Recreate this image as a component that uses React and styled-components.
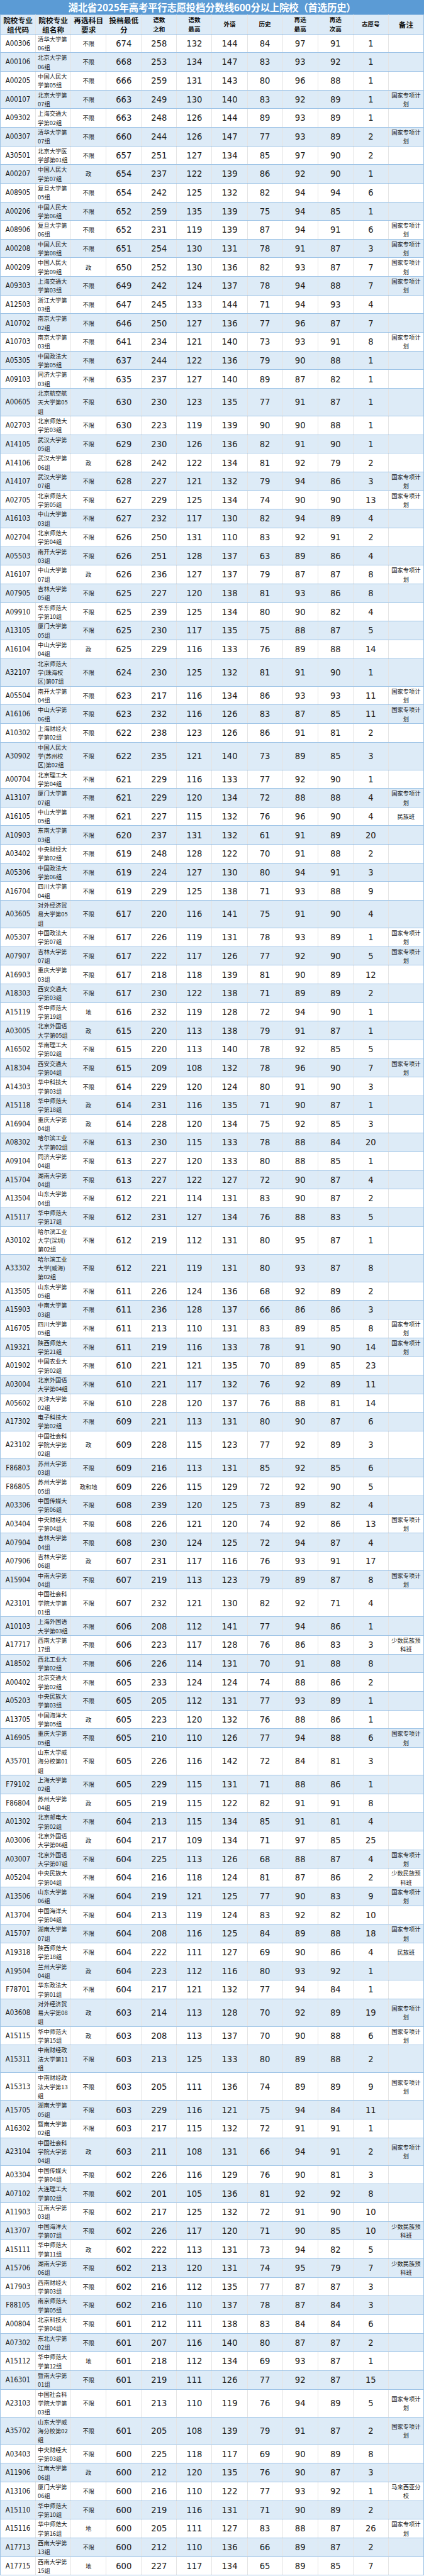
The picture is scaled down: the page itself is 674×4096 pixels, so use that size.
import React from "react";
import styled, { createGlobalStyle } from "styled-components";

const GlobalStyle = createGlobalStyle`
  html, body { margin: 0; padding: 0; background: #ffffff; }
  * { box-sizing: border-box; }
`;

const G = "国家专项计划";
const S = "少数民族预科班";
const M = "民族班";
const X = "马来西亚分校";

const RAW = `A00306,清华大学第06组,不限,674,258,132,144,84,97,91,1,
A00106,北京大学第06组,不限,668,253,134,147,83,93,92,1,
A00205,中国人民大学第05组,不限,666,259,131,143,80,96,88,1,
A00107,北京大学第07组,不限,663,249,130,140,83,92,89,1,G
A09302,上海交通大学第02组,不限,663,248,126,144,89,93,89,1,
A00307,清华大学第07组,不限,660,244,126,147,77,93,89,2,G
A30501,北京大学医学部第01组,不限,657,251,127,134,85,97,90,2,
A00207,中国人民大学第07组,政,654,237,122,139,86,92,90,1,
A08905,复旦大学第05组,不限,654,242,125,132,82,94,94,6,
A00206,中国人民大学第06组,不限,652,259,135,139,75,94,85,1,
A08906,复旦大学第06组,不限,652,231,119,139,87,94,91,6,G
A00208,中国人民大学第08组,不限,651,254,130,131,78,91,87,3,G
A00209,中国人民大学第09组,政,650,252,130,136,82,93,87,7,G
A09303,上海交通大学第03组,不限,649,242,124,137,78,94,88,7,G
A12503,浙江大学第03组,不限,647,245,133,144,71,94,93,4,
A10702,南京大学第02组,不限,646,250,127,136,77,96,87,7,
A10703,南京大学第03组,不限,641,234,121,140,73,93,91,8,G
A05305,中国政法大学第05组,不限,637,244,122,136,79,90,88,1,
A09103,同济大学第03组,不限,635,237,127,140,89,87,82,1,
A00605,北京航空航天大学第05组,不限,630,230,123,135,77,91,87,1,
A02703,北京师范大学第03组,不限,630,223,119,139,90,90,88,1,
A14105,武汉大学第05组,不限,629,230,126,136,82,91,90,1,
A14106,武汉大学第06组,政,628,242,122,134,81,92,79,2,
A14107,武汉大学第07组,不限,628,227,121,132,79,94,86,3,G
A02705,北京师范大学第05组,不限,627,229,125,134,74,90,90,13,G
A16103,中山大学第03组,不限,627,232,117,130,82,94,89,4,
A02704,北京师范大学第04组,不限,626,250,131,110,83,92,91,2,
A05503,南开大学第03组,不限,626,251,128,137,63,89,86,4,
A16107,中山大学第07组,政,626,236,127,137,79,87,87,8,G
A07905,吉林大学第05组,不限,625,227,120,138,81,93,86,8,
A09910,华东师范大学第10组,不限,625,239,125,134,80,90,82,4,
A13105,厦门大学第05组,不限,625,230,117,135,75,88,87,5,
A16104,中山大学第04组,政,625,229,116,133,76,89,88,14,
A32107,北京师范大学(珠海校区)第07组,不限,624,230,125,132,81,91,90,1,
A05504,南开大学第04组,不限,623,217,116,134,86,93,93,11,G
A16106,中山大学第06组,不限,623,232,116,126,83,87,85,11,G
A10302,上海财经大学第02组,不限,622,238,123,126,86,91,81,2,
A30902,中国人民大学(苏州校区)第02组,不限,622,235,121,140,73,89,85,3,
A00704,北京理工大学第04组,不限,621,229,116,133,77,92,90,1,
A13107,厦门大学第07组,不限,621,229,120,134,72,88,88,4,G
A16105,中山大学第05组,不限,621,227,115,132,76,96,90,4,M
A10903,东南大学第03组,不限,620,237,131,132,61,91,89,20,
A03402,中央财经大学第02组,不限,619,248,128,122,70,91,88,2,
A05306,中国政法大学第06组,不限,619,224,127,130,80,94,91,3,
A16704,四川大学第04组,不限,619,229,125,138,71,93,88,9,
A03605,对外经济贸易大学第05组,不限,617,220,116,141,75,91,90,4,
A05307,中国政法大学第07组,不限,617,226,119,131,78,93,89,1,G
A07907,吉林大学第07组,不限,617,222,117,126,77,92,90,5,G
A16903,重庆大学第03组,不限,617,218,118,139,81,90,89,12,
A18303,西安交通大学第03组,不限,617,230,122,138,71,89,89,2,
A15119,华中师范大学第19组,地,616,232,119,128,72,94,90,1,
A03005,北京外国语大学第05组,政,615,220,113,138,79,91,87,1,
A16502,华南理工大学第02组,不限,615,220,113,140,78,92,85,5,
A18304,西安交通大学第04组,不限,615,209,108,132,78,96,90,7,G
A14303,华中科技大学第03组,不限,614,229,120,124,80,91,90,3,
A15118,华中师范大学第18组,政,614,231,116,135,71,90,87,1,
A16904,重庆大学第04组,政,614,228,120,134,75,92,85,3,
A08302,哈尔滨工业大学第02组,不限,613,230,115,133,78,88,84,20,
A09104,同济大学第04组,不限,613,227,120,133,80,88,85,1,
A15704,湖南大学第04组,不限,613,227,122,127,72,90,87,4,
A13504,山东大学第04组,不限,612,221,114,131,83,90,87,2,
A15117,华中师范大学第17组,不限,612,231,127,134,76,88,83,5,
A30102,哈尔滨工业大学(深圳)第02组,不限,612,219,112,131,80,95,87,1,
A33302,哈尔滨工业大学(威海)第02组,不限,612,221,119,131,80,93,87,8,
A13505,山东大学第05组,不限,611,226,124,136,68,92,89,2,
A15903,中南大学第03组,不限,611,236,128,137,66,86,86,3,
A16705,四川大学第05组,不限,611,213,110,131,83,89,85,8,G
A19321,陕西师范大学第21组,不限,611,219,116,133,78,91,90,14,G
A01902,中国农业大学第02组,不限,610,221,121,135,70,89,85,23,
A03004,北京外国语大学第04组,不限,610,221,117,132,76,92,89,11,
A05602,天津大学第02组,不限,610,228,120,137,76,88,81,14,
A17302,电子科技大学第02组,不限,609,221,113,131,80,90,87,6,
A23102,中国社会科学院大学第02组,政,609,228,115,123,77,92,89,3,
F86803,苏州大学第03组,不限,609,216,113,131,85,92,85,6,
F86805,苏州大学第05组,政和地,609,226,115,129,72,92,90,5,
A03306,中国传媒大学第06组,不限,608,239,120,125,73,89,82,4,
A03404,中央财经大学第04组,不限,608,226,121,120,74,92,86,13,G
A07904,吉林大学第04组,不限,608,230,124,125,72,94,87,4,
A07906,吉林大学第06组,政,607,231,117,116,76,93,91,17,
A15904,中南大学第04组,不限,607,219,113,123,79,89,87,8,G
A23101,中国社会科学院大学第01组,不限,607,232,121,130,82,92,71,4,
A10103,上海外国语大学第03组,不限,606,208,112,141,77,94,86,1,
A17717,西南大学第17组,不限,606,223,117,128,76,86,83,3,S
A18502,西北工业大学第02组,不限,606,226,114,131,70,91,88,8,
A00402,北京交通大学第02组,不限,605,233,124,124,74,88,86,2,
A05203,中央民族大学第03组,不限,605,205,112,131,77,93,89,1,
A13705,中国海洋大学第05组,政,605,223,120,132,76,88,86,1,
A16905,重庆大学第05组,不限,605,210,110,126,77,94,88,6,G
A35701,山东大学威海分校第01组,不限,605,226,116,142,72,84,81,3,
F79102,上海大学第02组,不限,605,229,115,131,71,88,86,1,
F86804,苏州大学第04组,政,605,219,115,122,82,91,91,8,
A01302,北京邮电大学第02组,不限,604,213,115,134,85,91,81,4,
A03006,北京外国语大学第06组,政,604,217,109,134,71,97,85,25,
A03007,北京外国语大学第07组,不限,604,225,113,126,68,88,87,4,G
A05204,中央民族大学第04组,不限,604,216,118,124,81,87,86,2,S
A13506,山东大学第06组,不限,604,219,121,125,77,90,83,9,G
A13704,中国海洋大学第04组,不限,604,213,119,124,83,92,82,10,
A15707,湖南大学第07组,不限,604,208,116,125,84,89,88,18,G
A19318,陕西师范大学第18组,不限,604,222,111,127,69,90,86,4,M
A19504,兰州大学第04组,政,604,223,112,116,80,93,92,1,
F78701,华东政法大学第01组,不限,604,217,121,132,77,94,84,1,
A03608,对外经济贸易大学第08组,政,603,214,113,128,70,92,89,19,G
A15115,华中师范大学第15组,政,603,208,113,137,70,90,88,6,G
A15311,中南财经政法大学第11组,不限,603,213,125,133,80,89,88,2,
A15313,中南财经政法大学第13组,不限,603,205,111,136,74,89,89,9,G
A15705,湖南大学第05组,不限,603,229,116,121,75,94,84,11,
A16302,暨南大学第02组,不限,603,217,115,132,72,91,91,1,
A23104,中国社会科学院大学第04组,政,603,211,108,131,66,94,91,2,G
A03304,中国传媒大学第04组,不限,602,226,116,129,76,90,81,3,
A07102,大连理工大学第02组,不限,602,201,105,136,81,92,92,8,
A11903,江南大学第03组,不限,602,217,125,132,72,91,90,10,
A13707,中国海洋大学第07组,不限,602,226,117,120,71,90,85,10,S
A15111,华中师范大学第11组,政,602,222,113,131,73,94,82,5,
A15706,湖南大学第06组,不限,602,213,120,131,74,95,79,7,S
A17903,西南财经大学第03组,不限,602,216,112,135,77,87,87,3,
F88105,南京师范大学第05组,不限,602,216,110,137,78,87,84,3,
A00804,北京科技大学第04组,不限,601,212,111,138,83,84,84,6,
A07302,东北大学第02组,不限,601,207,116,140,80,87,87,2,
A15112,华中师范大学第12组,地,601,218,112,134,69,93,87,1,
A16301,暨南大学第01组,不限,601,219,111,126,77,92,87,15,
A23103,中国社会科学院大学第03组,不限,601,213,110,119,76,94,89,5,G
A35702,山东大学威海分校第02组,不限,601,205,108,139,79,91,87,2,G
A03403,中央财经大学第03组,不限,600,225,118,117,69,90,89,8,
A11906,江南大学第06组,政,600,212,120,135,76,90,87,3,
A13106,厦门大学第06组,不限,600,216,110,122,77,93,92,1,X
A15110,华中师范大学第10组,不限,600,219,116,131,71,90,89,2,
A15116,华中师范大学第16组,地,600,205,111,127,83,88,87,26,G
A17713,西南大学第13组,不限,600,212,110,136,66,89,87,2,
A17715,西南大学第15组,地,600,227,117,134,65,89,85,7,`;

const NOTES = { G, S, M, X };

const ROWS = RAW.split("\n").map((line) => {
  const p = line.split(",");
  return {
    code: p[0],
    name: p[1],
    req: p[2],
    scores: p.slice(3, 11),
    note: NOTES[p[11]] || "",
  };
});

const HEADERS = [
  { lines: ["院校专业", "组代码"], big: true },
  { lines: ["院校专业", "组名称"], big: true },
  { lines: ["再选科目", "要求"], big: true },
  { lines: ["投档最低", "分"], big: true },
  { lines: ["语数", "之和"] },
  { lines: ["语数", "最高"] },
  { lines: ["外语"] },
  { lines: ["历史"] },
  { lines: ["再选", "最高"] },
  { lines: ["再选", "次高"] },
  { lines: ["志愿号"] },
  { lines: ["备注"], big: true },
];

const CJK = `"Microsoft YaHei", "Noto Sans CJK SC", "Noto Sans", sans-serif`;
const NUM = `"Liberation Sans Narrow", "DejaVu Sans Condensed", "Noto Sans CJK SC", sans-serif`;

const BLUE_LINE = "#9dc3e6";
const GRID_LINE = "#e4e4e4";

const PAD = {
  name: "0 2px 0 3px",
  num: "0 2px",
  code: "0 2px",
  cjk: "0 2px",
};

const SIZE = {
  name: "9.3px",
  cjk: "9.3px",
  num: "14.6px",
  code: "11.4px",
};

const Page = styled.div`
  width: 674px;
  background: #ffffff;
`;

const TitleBar = styled.div`
  height: 22.6px;
  background: #5b9bd5;
  color: #ffffff;
  font-family: ${CJK};
  font-weight: 700;
  font-size: 15.4px;
  line-height: 22.6px;
  text-align: center;
  white-space: nowrap;
  letter-spacing: -0.2px;
`;

const Table = styled.table`
  width: 674px;
  border-collapse: collapse;
  table-layout: fixed;
`;

const HeadCell = styled.th`
  height: 31px;
  padding: 0;
  background: #ddebf7;
  color: #111111;
  font-family: ${CJK};
  font-weight: 700;
  font-size: ${(p) => (p.$big ? "11.7px" : "9.6px")};
  line-height: 15px;
  text-align: center;
  vertical-align: middle;
  border-top: 1px solid ${BLUE_LINE};
  border-bottom: 1px solid ${BLUE_LINE};
  border-left: 1px solid ${GRID_LINE};
  border-right: 1px solid ${GRID_LINE};
  &:first-child { border-left-color: ${BLUE_LINE}; }
  &:last-child { border-right-color: ${BLUE_LINE}; }
`;

const Row = styled.tr`
  background: ${(p) => (p.$alt ? "#ddebf7" : "#ffffff")};
`;

const Cell = styled.td`
  padding: ${(p) => PAD[p.$kind]};
  color: #1a1a1a;
  vertical-align: middle;
  text-align: ${(p) => (p.$kind === "name" ? "left" : "center")};
  border-top: 1px solid ${BLUE_LINE};
  border-bottom: 1px solid ${BLUE_LINE};
  border-left: 1px solid ${GRID_LINE};
  border-right: 1px solid ${GRID_LINE};
  font-family: ${(p) => (p.$kind === "num" || p.$kind === "code" ? NUM : CJK)};
  font-size: ${(p) => SIZE[p.$kind]};
  line-height: 14.33px;
  line-break: strict;
  &:first-child { border-left-color: ${BLUE_LINE}; }
  &:last-child { border-right-color: ${BLUE_LINE}; }
`;

export default function App() {
  return (
    <Page>
      <GlobalStyle />
      <TitleBar>湖北省2025年高考平行志愿投档分数线600分以上院校（首选历史）</TitleBar>
      <Table>
        <thead>
          <tr>
            {HEADERS.map((h, i) => (
              <HeadCell key={i} $big={h.big}>
                {h.lines.map((l, j) => (
                  <React.Fragment key={j}>
                    {j > 0 && <br />}
                    {l}
                  </React.Fragment>
                ))}
              </HeadCell>
            ))}
          </tr>
        </thead>
        <tbody>
          {ROWS.map((r, i) => (
            <Row key={r.code} $alt={i % 2 === 1}>
              <Cell $kind="code">{r.code}</Cell>
              <Cell $kind="name">{r.name}</Cell>
              <Cell $kind="cjk">{r.req}</Cell>
              {r.scores.map((s, j) => (
                <Cell key={j} $kind="num">
                  {s}
                </Cell>
              ))}
              <Cell $kind="cjk">{r.note}</Cell>
            </Row>
          ))}
        </tbody>
      </Table>
    </Page>
  );
}
